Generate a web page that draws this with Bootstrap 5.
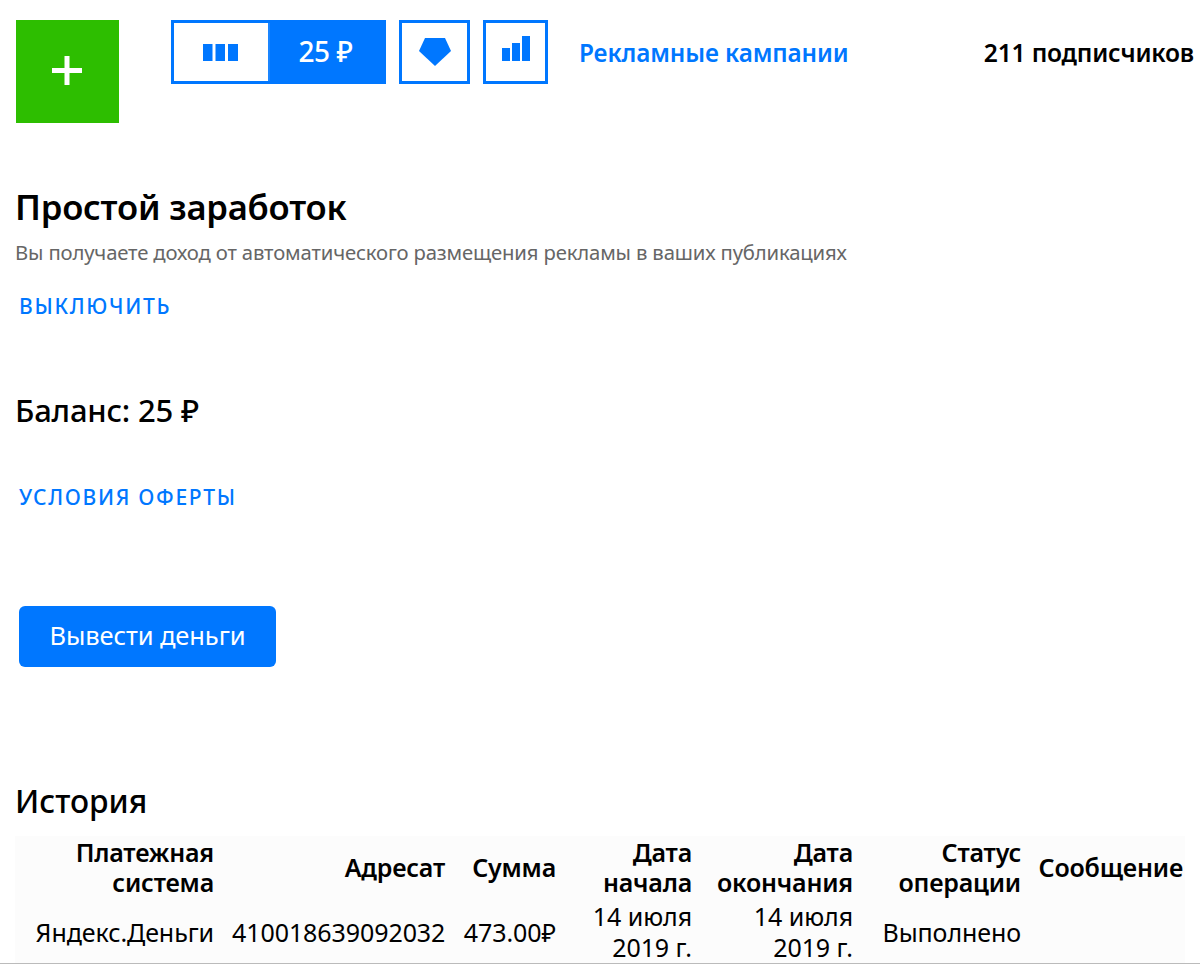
<!DOCTYPE html>
<html lang="ru">
<head>
<meta charset="utf-8">
<title>Простой заработок</title>
<link href="https://cdn.jsdelivr.net/npm/bootstrap@5.3.0/dist/css/bootstrap.min.css" rel="stylesheet">
<style>
html,body{height:964px;overflow:hidden}
body{font-family:"Noto Sans","Open Sans",sans-serif;color:#000;background:#fff}
.page-wrap{height:964px;padding:20px 6px 0 16px;border-bottom:1px solid #bbb;overflow:hidden}
.add-tile{width:103px;height:103px;background:#2dbe00;color:#fff;border:0;display:flex;align-items:center;justify-content:center;padding:0 2px 3px 0;margin-right:52px}
.tile-group{height:64px;border:3px solid #07f;display:flex;background:#fff}
.seg-icon{width:94px;display:flex;align-items:center;justify-content:center;padding-right:2px}
.seg-val{width:115px;background:#07f;border-left:2px solid #1a85ff;color:#fff;font-size:28px;font-weight:500;display:flex;align-items:center;justify-content:center;letter-spacing:-.4px;padding:0 2px 3px 0}
.tile-solo{height:64px;border:3px solid #07f;display:flex;align-items:center;justify-content:center;background:#fff;margin-left:13px}
.tile-gem{width:71px}
.tile-bars{width:65px;padding-bottom:7px}
.camp-link{color:#07f;font-size:24.300px;font-weight:600;text-decoration:none;margin-left:31px;margin-top:15px;letter-spacing:-.1px}
.subs{font-size:24.600px;font-weight:600;margin-left:auto;margin-top:15px;letter-spacing:-.2px;white-space:nowrap}
.head-main{font-size:34.600px;font-weight:600;line-height:44px;margin:62px 0 0 -1px;letter-spacing:-.2px}
.sub-text{font-size:20.300px;color:#666;line-height:26px;margin:10px 0 0 -1px;letter-spacing:-.15px}
.caps-link{display:block;color:#07f;font-size:21px;font-weight:500;letter-spacing:1.7px;text-decoration:none;margin-left:3px;line-height:26px}
.caps-off{margin-top:28px}
.caps-offer{margin-top:56px}
.balance{font-size:31px;font-weight:500;line-height:36px;margin:73px 0 0 -1px;letter-spacing:-.2px}
.pay-btn{background:#07f;color:#fff;font-size:25.500px;border:0;border-radius:6px;width:257px;height:61px;margin:96px 0 0 3px;padding:0 0 2px;letter-spacing:-.1px;display:block}
.hist-title{font-size:31.700px;font-weight:500;line-height:38px;margin:115px 0 16px -1px}
.hist-table{width:1170px;margin:0 0 0 -1px;background:#fcfcfc;font-size:25px;line-height:30px;border-collapse:collapse;letter-spacing:-.2px;table-layout:fixed}
.hist-table th{font-weight:600;text-align:right;vertical-align:middle;padding:1px 9px 4px}
.hist-table td{text-align:right;vertical-align:middle;padding:0 9px;line-height:31px;letter-spacing:-.08px}
.hist-table th:last-child{padding:1px 2px 4px 0}
.hist-table th:nth-child(1){width:208px}
.hist-table th:nth-child(2){width:231px}
.hist-table th:nth-child(3){width:111px}
.hist-table th:nth-child(4){width:136px}
.hist-table th:nth-child(5){width:161px}
.hist-table th:nth-child(6){width:168px}
</style>
</head>
<body>
<div class="page-wrap">
  <div class="d-flex align-items-start">
    <button class="add-tile" aria-label="Добавить"><svg width="30" height="29" viewBox="0 0 30 29"><path d="M0 12h30v5H0zM12.500 0h5v29h-5z" fill="#fff"/></svg></button>
    <div class="tile-group">
      <div class="seg-icon"><svg width="35" height="17" viewBox="0 0 35 17"><path d="M0 0h9.500v17H0zM12.500 0H22v17h-9.500zM25 0h10v17H25z" fill="#07f"/></svg></div>
      <div class="seg-val">25 ₽</div>
    </div>
    <div class="tile-solo tile-gem"><svg width="32" height="28" viewBox="0 0 32 28"><path d="M6 0h20l6 13-16 15L0 13z" fill="#07f"/></svg></div>
    <div class="tile-solo tile-bars"><svg width="28" height="25" viewBox="0 0 28 25"><path d="M0 12h8v13H0zM10 7h8v18h-8zM20 0h8v25h-8z" fill="#07f"/></svg></div>
    <a class="camp-link" href="#">Рекламные кампании</a>
    <div class="subs">211 подписчиков</div>
  </div>
  <h1 class="head-main">Простой заработок</h1>
  <p class="sub-text">Вы получаете доход от автоматического размещения рекламы в ваших публикациях</p>
  <a class="caps-link caps-off" href="#">ВЫКЛЮЧИТЬ</a>
  <h2 class="balance">Баланс: 25 ₽</h2>
  <a class="caps-link caps-offer" href="#">УСЛОВИЯ ОФЕРТЫ</a>
  <button class="pay-btn">Вывести деньги</button>
  <h2 class="hist-title">История</h2>
  <table class="hist-table">
    <thead><tr>
      <th>Платежная система</th><th>Адресат</th><th>Сумма</th><th>Дата начала</th><th>Дата окончания</th><th>Статус операции</th><th>Сообщение</th>
    </tr></thead>
    <tbody><tr>
      <td>Яндекс.Деньги</td><td>410018639092032</td><td>473.00₽</td><td>14 июля 2019 г.</td><td>14 июля 2019 г.</td><td>Выполнено</td><td></td>
    </tr></tbody>
  </table>
</div>
<script src="https://cdn.jsdelivr.net/npm/bootstrap@5.3.0/dist/js/bootstrap.bundle.min.js"></script>
</body>
</html>
